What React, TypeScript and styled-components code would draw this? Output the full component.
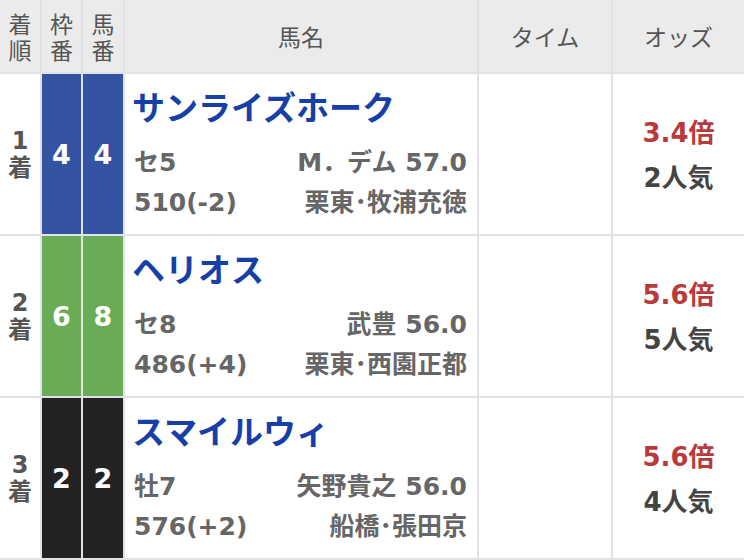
import styled, { createGlobalStyle } from "styled-components";

interface Horse {
  rank: number;
  waku: number;
  umaban: number;
  name: string;
  sexAge: string;
  jockey: string;
  weight: string;
  trainer: string;
  odds: string;
  popularity: number;
}

const horses: Horse[] = [
  {
    rank: 1,
    waku: 4,
    umaban: 4,
    name: "サンライズホーク",
    sexAge: "セ5",
    jockey: "M．デム 57.0",
    weight: "510(-2)",
    trainer: "栗東･牧浦充徳",
    odds: "3.4倍",
    popularity: 2,
  },
  {
    rank: 2,
    waku: 6,
    umaban: 8,
    name: "ヘリオス",
    sexAge: "セ8",
    jockey: "武豊 56.0",
    weight: "486(+4)",
    trainer: "栗東･西園正都",
    odds: "5.6倍",
    popularity: 5,
  },
  {
    rank: 3,
    waku: 2,
    umaban: 2,
    name: "スマイルウィ",
    sexAge: "牡7",
    jockey: "矢野貴之 56.0",
    weight: "576(+2)",
    trainer: "船橋･張田京",
    odds: "5.6倍",
    popularity: 4,
  },
];

const wakuColors: Record<number, string> = {
  2: "#222222",
  4: "#3553a3",
  6: "#6aac56",
};

const GlobalStyle = createGlobalStyle`
  html, body {
    margin: 0;
    padding: 0;
    background: #fff;
    overflow: hidden;
  }
  body {
    font-family: "DejaVu Sans", "Noto Sans CJK JP", sans-serif;
  }
`;

const Table = styled.div`
  display: grid;
  grid-template-columns: 40px 39px 40px 352px 132px 1fr;
  grid-template-rows: 72px repeat(3, 160px);
  gap: 2px;
  background: #e1e1e7;
  width: 744px;
  height: 560px;
  overflow: hidden;
`;

const HeadCell = styled.div`
  background: #ebebeb;
  color: #555;
  font-family: "Noto Sans CJK JP", sans-serif;
  font-size: 23px;
  line-height: 26px;
  display: flex;
  flex-direction: column;
  align-items: center;
  justify-content: center;
  text-align: center;
`;

const Cell = styled.div`
  background: #fff;
`;

const RankCell = styled(Cell)`
  display: flex;
  align-items: center;
  justify-content: center;
  text-align: center;
  color: #555;
  font-size: 24px;
  font-weight: bold;
  line-height: 27px;
  padding-top: 2px;
`;

const WakuCell = styled.div<{ $color: string }>`
  background: ${(p) => p.$color};
  color: #fff;
  font-size: 27px;
  font-weight: bold;
  display: flex;
  align-items: center;
  justify-content: center;
`;

const DetailCell = styled(Cell)`
  padding: 10px 10px 0 7px;
  box-sizing: border-box;
`;

const Name = styled.div`
  color: #1640a8;
  font-family: "Noto Sans CJK JP", sans-serif;
  font-size: 33px;
  font-weight: bold;
  line-height: 44px;
  white-space: nowrap;
`;

const InfoGrid = styled.div`
  margin-top: 15px;
  padding-left: 2px;
  display: grid;
  grid-template-columns: auto auto;
  justify-content: space-between;
  color: #666;
  font-size: 25px;
  font-weight: bold;
  line-height: 40px;
  white-space: nowrap;
`;

const Right = styled.span`
  text-align: right;
`;

const OddsCell = styled(Cell)`
  display: flex;
  flex-direction: column;
  align-items: center;
  justify-content: center;
  font-size: 26px;
  font-weight: bold;
  line-height: 45px;
  padding-top: 4px;
`;

const Odds = styled.div`
  color: #b83a3a;
`;

const Popularity = styled.div`
  color: #444;
`;

function App() {
  return (
    <>
      <GlobalStyle />
      <Table>
        <HeadCell>
          <span>着</span>
          <span>順</span>
        </HeadCell>
        <HeadCell>
          <span>枠</span>
          <span>番</span>
        </HeadCell>
        <HeadCell>
          <span>馬</span>
          <span>番</span>
        </HeadCell>
        <HeadCell>馬名</HeadCell>
        <HeadCell>タイム</HeadCell>
        <HeadCell>オッズ</HeadCell>

        {horses.map((h) => [
          <RankCell key={`r${h.rank}`}>
            {h.rank}
            <br />着
          </RankCell>,
          <WakuCell key={`w${h.rank}`} $color={wakuColors[h.waku]}>
            {h.waku}
          </WakuCell>,
          <WakuCell key={`u${h.rank}`} $color={wakuColors[h.waku]}>
            {h.umaban}
          </WakuCell>,
          <DetailCell key={`d${h.rank}`}>
            <Name>{h.name}</Name>
            <InfoGrid>
              <span>{h.sexAge}</span>
              <Right>{h.jockey}</Right>
              <span>{h.weight}</span>
              <Right>{h.trainer}</Right>
            </InfoGrid>
          </DetailCell>,
          <Cell key={`t${h.rank}`} />,
          <OddsCell key={`o${h.rank}`}>
            <Odds>{h.odds}</Odds>
            <Popularity>{h.popularity}人気</Popularity>
          </OddsCell>,
        ])}
      </Table>
    </>
  );
}

export default App;
